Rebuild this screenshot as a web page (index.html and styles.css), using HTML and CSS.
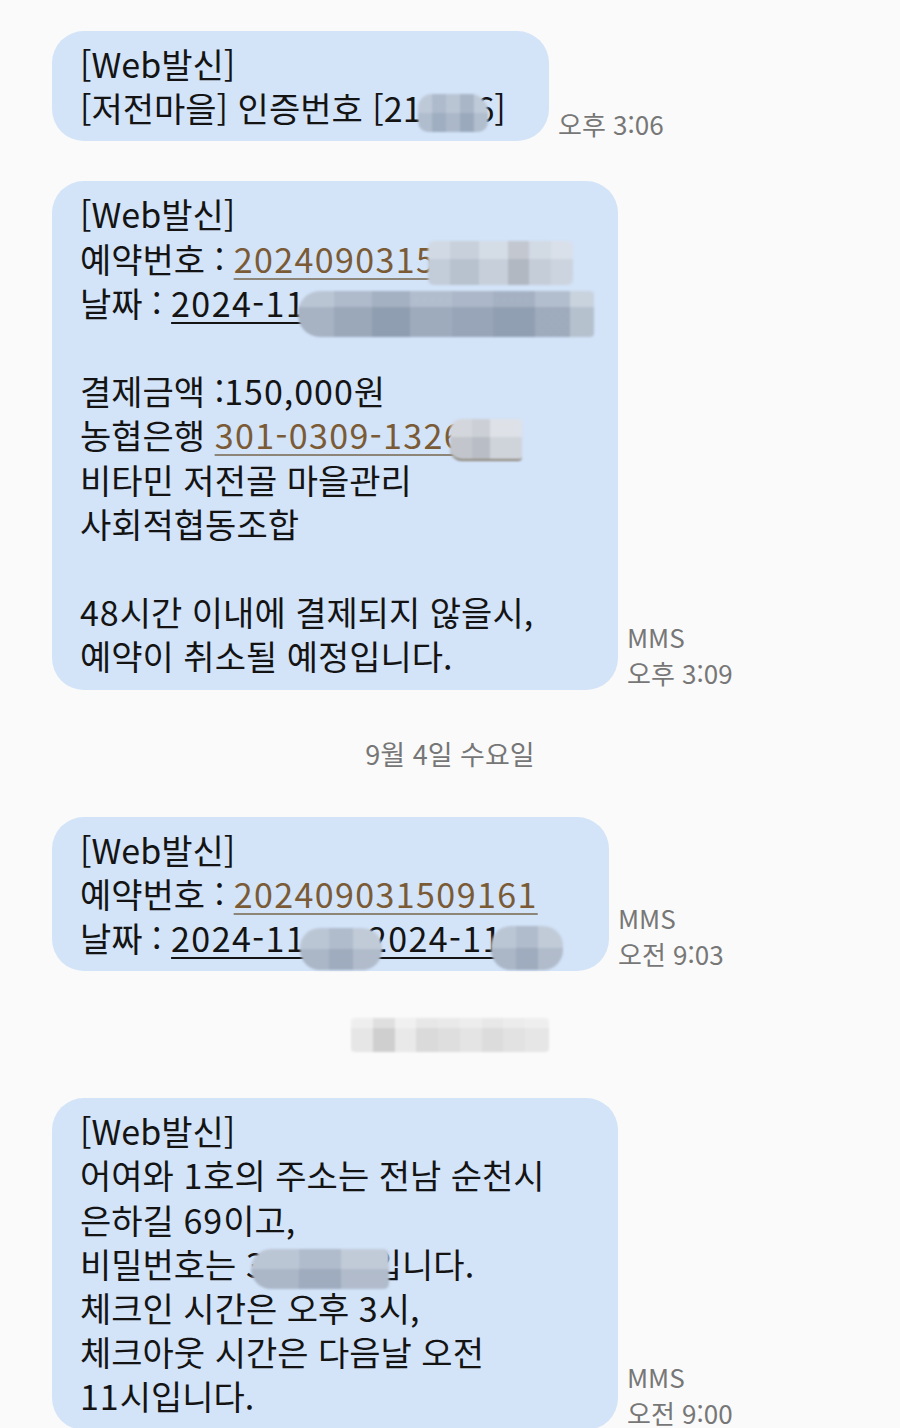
FILE: index.html
```html
<!DOCTYPE html>
<html lang="ko">
<head>
<meta charset="utf-8">
<title>메시지</title>
<link rel="stylesheet" href="styles.css">
</head>
<body>
<main class="thread">
  <div class="row">
    <div class="bubble bubble--code">
      [Web발신]<br>
      [저전마을] 인증번호 [21<span class="mosaic mosaic--code"></span>6]
    </div>
    <div class="meta">오후 3:06</div>
  </div>

  <div class="row">
    <div class="bubble bubble--wide">
      [Web발신]<br>
      예약번호 : <span class="link">2024090315</span><span class="mosaic mosaic--light mosaic--resv"></span><br>
      날짜 : <span class="date">2024-11</span><span class="mosaic mosaic--dark mosaic--date"></span><br>
      <br>
      결제금액 :<span class="num">150,000</span>원<br>
      농협은행 <span class="link">301-0309-1326</span><span class="mosaic mosaic--gray mosaic--acct"></span><br>
      비타민 저전골 마을관리<br>
      사회적협동조합<br>
      <br>
      <span class="num">48</span>시간 이내에 결제되지 않을시,<br>
      예약이 취소될 예정입니다.
    </div>
    <div class="meta">MMS<br>오후 3:09</div>
  </div>

  <div class="divider">9월 4일 수요일</div>

  <div class="row">
    <div class="bubble bubble--resv">
      [Web발신]<br>
      예약번호 : <span class="link">202409031509161</span><br>
      날짜 : <span class="date">2024-11</span><span class="mosaic mosaic--blob mosaic--d1"></span><span class="date">2024-11</span><span class="mosaic mosaic--blob mosaic--d2"></span>
    </div>
    <div class="meta">MMS<br>오전 9:03</div>
  </div>

  <div class="divider"><span class="mosaic mosaic--day"></span></div>

  <div class="row">
    <div class="bubble bubble--wide">
      [Web발신]<br>
      어여와 <span class="num">1</span>호의 주소는 전남 순천시<br>
      은하길 <span class="num">69</span>이고,<br>
      비밀번호는 3<span class="mosaic mosaic--blob mosaic--pw"></span>입니다.<br>
      체크인 시간은 오후 <span class="num">3</span>시,<br>
      체크아웃 시간은 다음날 오전<br>
      <span class="num">11</span>시입니다.
    </div>
    <div class="meta">MMS<br>오전 9:00</div>
  </div>
</main>
</body>
</html>
```

FILE: styles.css
```css
html, body {
  margin: 0;
  background: #fafafa;
}

body {
  font-family: "Noto Sans CJK KR", "Noto Sans", sans-serif;
  overflow: hidden;
}

.thread {
  display: flex;
  flex-direction: column;
  padding-top: 31px;
}

.row {
  display: flex;
  align-items: flex-end;
  gap: 9px;
  padding-left: 52px;
}

.row + .row {
  margin-top: 40px;
}

.bubble {
  box-sizing: border-box;
  background: #d3e3f8;
  border-radius: 32px;
  padding: 11px 16px 11px 28px;
  font-size: 34px;
  line-height: 44.2px;
  color: #141414;
  white-space: nowrap;
}

.bubble--code { width: 497px; }
.bubble--wide { width: 566px; }
.bubble--resv { width: 557px; }

.meta {
  font-size: 26px;
  line-height: 36px;
  color: #777;
  white-space: nowrap;
  margin-bottom: -1px;
}

.divider {
  box-sizing: border-box;
  height: 127px;
  display: flex;
  align-items: center;
  justify-content: center;
  font-size: 27px;
  line-height: 31px;
  color: #767676;
}

.num {
  letter-spacing: 1px;
}

.link {
  color: #7a5b36;
  letter-spacing: 1.4px;
  text-decoration: underline;
  text-decoration-color: #8c8578;
  text-decoration-thickness: 2px;
  text-underline-offset: 5px;
}

.date {
  letter-spacing: 1.4px;
  text-decoration: underline;
  text-decoration-thickness: 2px;
  text-underline-offset: 5px;
}

.mosaic {
  display: inline-block;
  vertical-align: middle;
  height: 38px;
  margin-top: -12px;
  margin-bottom: -12px;
  border-radius: 10px;
  filter: blur(1.2px);
  background:
    linear-gradient(180deg, rgba(255,255,255,0.08) 0 50%, rgba(40,60,90,0.06) 50% 100%),
    linear-gradient(90deg, #b9c5d5 0 20%, #a7b5c8 20% 40%, #b4c0d0 40% 60%, #a2b0c3 60% 80%, #bac6d5 80% 100%);
}

.mosaic--code {
  width: 70px;
  margin-left: -4px;
  margin-right: -12px;
  border-radius: 14px 18px 10px 10px;
}

.mosaic--light {
  background:
    linear-gradient(180deg, rgba(255,255,255,0.15) 0 40%, rgba(0,0,0,0.03) 40% 100%),
    linear-gradient(90deg, #c9d3e0 0 15%, #bec8d5 15% 35%, #cdd6e2 35% 55%, #b8bec8 55% 70%, #cbd4e0 70% 85%, #d3dbe6 85% 100%);
}

.mosaic--resv {
  width: 145px;
  height: 44px;
  margin-left: -8px;
  border-radius: 6px;
}

.mosaic--dark {
  background:
    linear-gradient(180deg, rgba(255,255,255,0.1) 0 35%, rgba(30,40,60,0.08) 35% 100%),
    linear-gradient(90deg, #b3bfcf 0 12%, #a6b3c5 12% 25%, #9aa8bb 25% 38%, #a9b6c8 38% 52%, #a3b0c3 52% 66%, #9ba9bc 66% 80%, #aab7c8 80% 92%, #c3cedb 92% 100%);
}

.mosaic--date {
  width: 296px;
  height: 46px;
  margin-left: -8px;
  border-radius: 22px 4px 4px 22px;
  vertical-align: -8px;
}

.mosaic--gray {
  background:
    linear-gradient(180deg, rgba(255,255,255,0.2) 0 45%, rgba(0,0,0,0.03) 45% 100%),
    linear-gradient(90deg, #c8ccd3 0 30%, #bfc4cc 30% 55%, #d6dbe2 55% 100%);
}

.mosaic--acct {
  width: 72px;
  height: 40px;
  margin-left: -14px;
  border-radius: 12px 4px 4px 12px;
  border-bottom: 2px solid #8c8578;
}

.mosaic--blob {
  border-radius: 20px;
  background:
    linear-gradient(180deg, rgba(255,255,255,0.1) 0 50%, rgba(30,40,60,0.06) 50% 100%),
    linear-gradient(90deg, #b4c0d0 0 35%, #a7b4c6 35% 65%, #bac5d4 65% 100%);
}

.mosaic--d1 {
  width: 82px;
  height: 42px;
  margin-left: -6px;
  margin-right: -14px;
  vertical-align: -6px;
}

.mosaic--d2 {
  width: 72px;
  height: 44px;
  margin-left: -12px;
  vertical-align: -6px;
}

.mosaic--pw {
  width: 138px;
  height: 40px;
  margin-left: -14px;
  margin-right: -18px;
  border-radius: 22px 6px 6px 22px;
}

.mosaic--day {
  width: 198px;
  height: 34px;
  margin: 0;
  border-radius: 4px;
  filter: blur(1px);
  background:
    linear-gradient(180deg, rgba(255,255,255,0.35) 0 30%, rgba(0,0,0,0) 30% 100%),
    linear-gradient(90deg, #e6e6e6 0 11%, #cfcfcf 11% 22%, #e9e9e9 22% 33%, #dadada 33% 44%, #dedede 44% 55%, #e4e4e4 55% 66%, #dcdcdc 66% 77%, #e2e2e2 77% 88%, #e6e6e6 88% 100%);
}
```
